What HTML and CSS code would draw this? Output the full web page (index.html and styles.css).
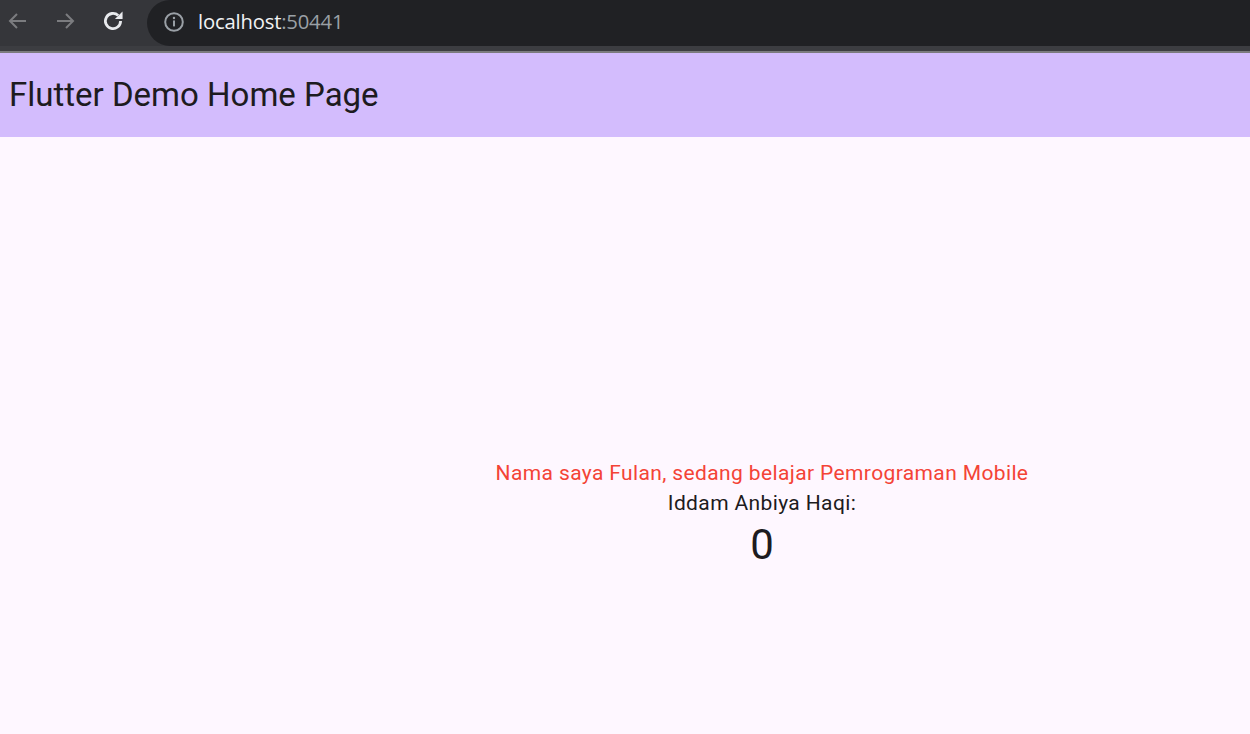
FILE: index.html
```html
<!DOCTYPE html>
<html>
<head>
<meta charset="utf-8">
<link rel="stylesheet" href="styles.css">
</head>
<body>
<div class="browser">
  <div class="toolbar">
    <div class="nav">
      <svg class="ico" viewBox="0 0 24 24" width="24" height="24"><path d="M20 12H5M11 5l-7 7 7 7" fill="none" stroke="#7b7c7f" stroke-width="2"/></svg>
      <svg class="ico" viewBox="0 0 24 24" width="24" height="24"><path d="M4 12h15M13 5l7 7-7 7" fill="none" stroke="#7b7c7f" stroke-width="2"/></svg>
      <svg class="ico" viewBox="0 0 24 24" width="26" height="26"><path d="M19 12a7 7 0 1 1-2.2-5.1" fill="none" stroke="#e8eaed" stroke-width="2.6"/><path d="M20.8 3.2v7h-7z" fill="#e8eaed"/></svg>
    </div>
    <div class="omnibox">
      <svg class="info" viewBox="0 0 20 20" width="22" height="22"><circle cx="10" cy="10" r="8" fill="none" stroke="#9aa0a6" stroke-width="1.8"/><rect x="9.1" y="8.6" width="1.8" height="5.4" fill="#9aa0a6"/><circle cx="10" cy="6.4" r="1.1" fill="#9aa0a6"/></svg>
      <span class="host">localhost</span><span class="port">:50441</span>
    </div>
  </div>
  <div class="strip"></div>
  <div class="line"></div>
</div>
<div class="app">
  <header class="appbar"><h1 class="title">Flutter Demo Home Page</h1></header>
  <main class="body">
    <div class="content">
      <p class="red">Nama saya Fulan, sedang belajar Pemrograman Mobile</p>
      <p class="name">Iddam Anbiya Haqi:</p>
      <p class="count">0</p>
    </div>
  </main>
</div>
</body>
</html>
```
FILE: styles.css
```css
html, body {
  margin: 0;
  padding: 0;
  height: 100%;
  overflow: hidden;
}
body {
  display: flex;
  flex-direction: column;
  background: #fef7ff;
  font-family: Roboto, "Noto Sans", sans-serif;
}
.browser {
  background: #35363a;
}
.toolbar {
  height: 46px;
  display: flex;
  align-items: stretch;
}
.nav {
  width: 147px;
  display: flex;
  align-items: center;
  gap: 23px;
  padding-left: 6px;
  box-sizing: border-box;
}
.ico {
  display: block;
  margin-top: -4px;
}
.omnibox {
  flex: 1;
  background: #202124;
  border-radius: 23px 0 0 23px;
  display: flex;
  align-items: center;
  padding-left: 16px;
  font-family: "Open Sans", "Noto Sans", sans-serif;
  font-size: 20.3px;
  letter-spacing: -0.2px;
}
.info {
  margin-right: 13px;
  margin-top: -2px;
}
.host { color: #f1f3f4; margin-top: -4px; }
.port { color: #9aa0a6; margin-top: -4px; }
.strip {
  height: 5px;
  background: #3c3d41;
}
.line {
  height: 2px;
  background: #7b7b7e;
}
.app {
  flex: 1;
  display: flex;
  flex-direction: column;
}
.appbar {
  height: 84px;
  background: #d3bcfd;
  display: flex;
  align-items: center;
  padding-left: 9px;
}
.title {
  margin: 0;
  margin-top: -2px;
  font-weight: 400;
  font-size: 33px;
  color: #1d1b20;
}
.body {
  flex: 1;
  display: flex;
  justify-content: center;
  align-items: center;
  padding-left: 274px;
  padding-top: 158px;
}
.content {
  display: flex;
  flex-direction: column;
  align-items: center;
}
.content p { margin: 0; }
.red {
  color: #f44336;
  font-size: 21px;
  letter-spacing: 0.375px;
  line-height: 30px;
}
.name {
  color: #1d1b20;
  font-size: 21px;
  letter-spacing: 0.375px;
  line-height: 30px;
}
.count {
  color: #1d1b20;
  font-size: 42px;
  line-height: 54px;
}
```
